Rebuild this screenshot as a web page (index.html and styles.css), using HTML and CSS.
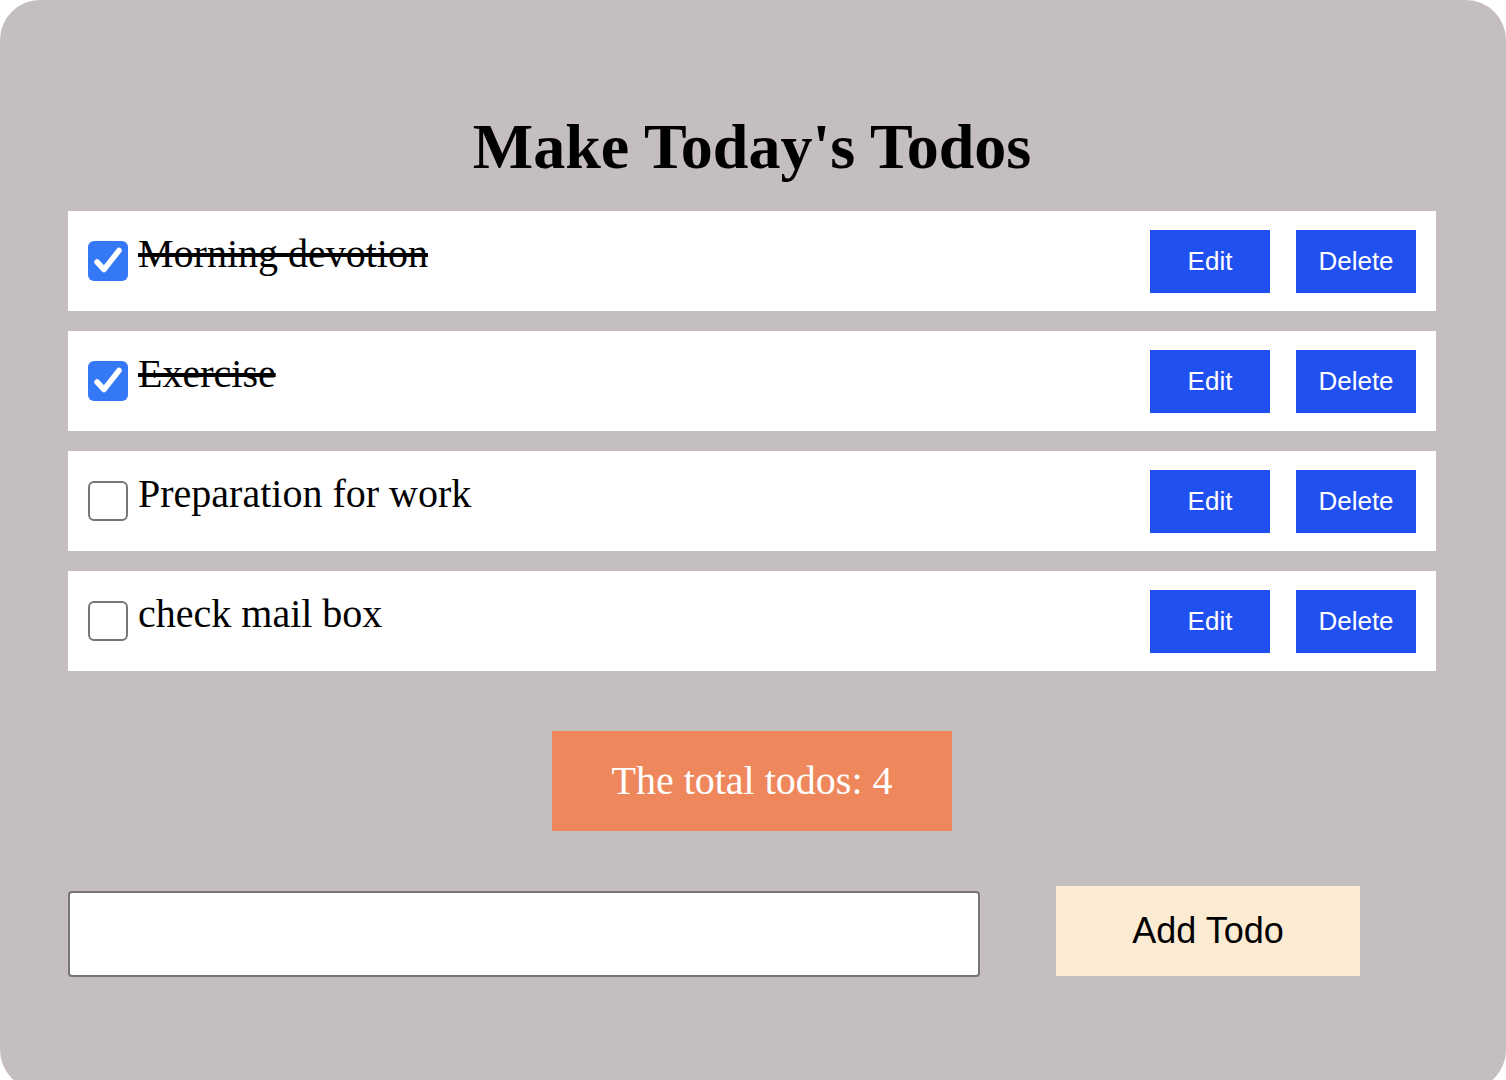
FILE: index.html
```html
<!DOCTYPE html>
<html lang="en">
<head>
<meta charset="utf-8">
<title>Make Today's Todos</title>
<link rel="stylesheet" href="styles.css">
</head>
<body>
<main class="app">
  <h1 class="title">Make Today's Todos</h1>
  <ul class="todo-list">
    <li class="todo">
      <div class="todo-main">
        <span class="check checked"><svg viewBox="0 0 40 40" width="40" height="40"><path d="M9 21 L16 28.5 L31 9.5" fill="none" stroke="#fff" stroke-width="5.5" stroke-linecap="round" stroke-linejoin="round"/></svg></span>
        <span class="todo-text done">Morning devotion</span>
      </div>
      <div class="todo-actions">
        <button class="btn-blue">Edit</button>
        <button class="btn-blue">Delete</button>
      </div>
    </li>
    <li class="todo">
      <div class="todo-main">
        <span class="check checked"><svg viewBox="0 0 40 40" width="40" height="40"><path d="M9 21 L16 28.5 L31 9.5" fill="none" stroke="#fff" stroke-width="5.5" stroke-linecap="round" stroke-linejoin="round"/></svg></span>
        <span class="todo-text done">Exercise</span>
      </div>
      <div class="todo-actions">
        <button class="btn-blue">Edit</button>
        <button class="btn-blue">Delete</button>
      </div>
    </li>
    <li class="todo">
      <div class="todo-main">
        <span class="check"></span>
        <span class="todo-text">Preparation for work</span>
      </div>
      <div class="todo-actions">
        <button class="btn-blue">Edit</button>
        <button class="btn-blue">Delete</button>
      </div>
    </li>
    <li class="todo">
      <div class="todo-main">
        <span class="check"></span>
        <span class="todo-text">check mail box</span>
      </div>
      <div class="todo-actions">
        <button class="btn-blue">Edit</button>
        <button class="btn-blue">Delete</button>
      </div>
    </li>
  </ul>
  <div class="total">The total todos: 4</div>
  <div class="add-row">
    <input class="add-input" type="text">
    <button class="add-btn">Add Todo</button>
  </div>
</main>
</body>
</html>
```

FILE: styles.css
```css
html, body {
  margin: 0;
  padding: 0;
  background: #ffffff;
}

body {
  overflow: hidden;
}

.app {
  box-sizing: border-box;
  width: 1506px;
  height: 1090px;
  background: #c4bebe;
  border-radius: 40px;
  padding: 110px 70px 0 68px;
  font-family: "Liberation Serif", "Times New Roman", serif;
}

.title {
  margin: 0 0 27px;
  font-size: 64px;
  line-height: 74px;
  font-weight: bold;
  text-align: center;
  color: #000;
}

.todo-list {
  list-style: none;
  margin: 0;
  padding: 0;
  display: flex;
  flex-direction: column;
  gap: 20px;
}

.todo {
  height: 100px;
  box-sizing: border-box;
  background: #ffffff;
  padding: 0 20px;
  display: flex;
  justify-content: space-between;
  align-items: center;
}

.todo-main {
  align-self: flex-start;
  padding-top: 20px;
  display: flex;
  align-items: flex-start;
}

.check {
  box-sizing: border-box;
  width: 40px;
  height: 40px;
  margin-top: 10px;
  margin-right: 10px;
  border: 2px solid #767676;
  border-radius: 6px;
  background: #fff;
  flex: none;
}

.check.checked {
  border: none;
  background: #3478f6;
}

.check svg {
  display: block;
}

.todo-text {
  font-size: 40px;
  line-height: 46px;
  color: #000;
}

.todo-text.done {
  text-decoration: line-through;
}

.todo-actions {
  display: flex;
  gap: 26px;
}

.btn-blue {
  width: 120px;
  height: 63px;
  border: none;
  margin: 0;
  padding: 0;
  background: #2150f0;
  color: #ffffff;
  font-family: "Liberation Sans", Arial, sans-serif;
  font-size: 26px;
}

.total {
  width: 400px;
  height: 100px;
  margin: 60px auto 0;
  background: #ee875b;
  color: #ffffff;
  font-size: 40px;
  line-height: 100px;
  text-align: center;
}

.add-row {
  margin-top: 55px;
  display: flex;
  align-items: flex-start;
  gap: 76px;
}

.add-input {
  box-sizing: border-box;
  width: 912px;
  height: 86px;
  margin: 5px 0 0;
  border: 2px solid #767676;
  border-radius: 4px;
  background: #ffffff;
  font-size: 30px;
}

.add-btn {
  width: 304px;
  height: 90px;
  border: none;
  margin: 0;
  padding: 0;
  background: #fbebd3;
  color: #000;
  font-family: "Liberation Sans", Arial, sans-serif;
  font-size: 36px;
}
```
